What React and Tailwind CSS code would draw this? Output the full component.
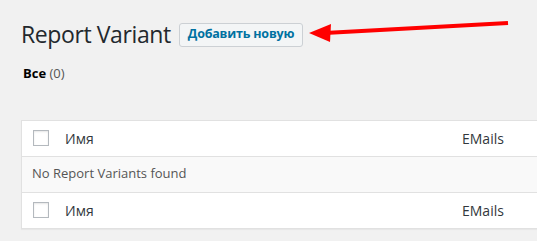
import React from 'react';

function Checkbox() {
  return <span className="block w-4 h-4 border border-[#b4b9be] bg-white shadow-[inset_0_1px_2px_rgba(0,0,0,0.1)]" />;
}

function HeadRow({ bottom }) {
  return (
    <div className={`flex items-center h-[36px] bg-white ${bottom ? 'border-t border-[#e1e1e1]' : 'border-b border-[#e1e1e1]'}`}>
      <div className="w-[43px] pl-[11px]">
        <Checkbox />
      </div>
      <div className="flex-1 text-[14px] text-[#32373c]">Имя</div>
      <div className="w-[88px] text-[14px] text-[#32373c]">EMails</div>
    </div>
  );
}

export default function App() {
  return (
    <div className="relative w-[537px] h-[241px] overflow-hidden bg-[#f1f1f1] font-['Open_Sans',sans-serif]">
      {/* Title */}
      <div className="flex items-center gap-[8px] pl-[21px] pt-[20px]">
        <h1 className="text-[23px] leading-[29px] text-[#23282d] font-normal tracking-[-0.4px]">Report Variant</h1>
        <button className="h-[24px] px-[8px] text-[12.5px] tracking-[-0.2px] font-bold text-[#0071a1] bg-[#f3f5f6] border border-[#ccd0d4] rounded-[3px] leading-none">
          Добавить новую
        </button>
      </div>

      {/* Filter */}
      <div className="pl-[23px] pt-[15px] text-[13px] text-[#555]">
        <span className="font-bold text-black">Все</span> (0)
      </div>

      {/* Table */}
      <div className="ml-[21px] mt-[36px] w-[530px] border border-[#e1e1e1] shadow-[0_1px_1px_rgba(0,0,0,0.04)]">
        <HeadRow />
        <div className="flex items-center h-[35px] pl-[10px] bg-[#f9f9f9] text-[13px] text-[#555]">
          No Report Variants found
        </div>
        <HeadRow bottom />
      </div>

      {/* Annotation arrow */}
      <svg className="absolute left-0 top-0" width="537" height="60" viewBox="0 0 537 60">
        <line x1="508" y1="23" x2="325" y2="33" stroke="#ff0000" strokeWidth="4" />
        <polygon points="309,33 331,24 330,42" fill="#ff0000" />
      </svg>
    </div>
  );
}
